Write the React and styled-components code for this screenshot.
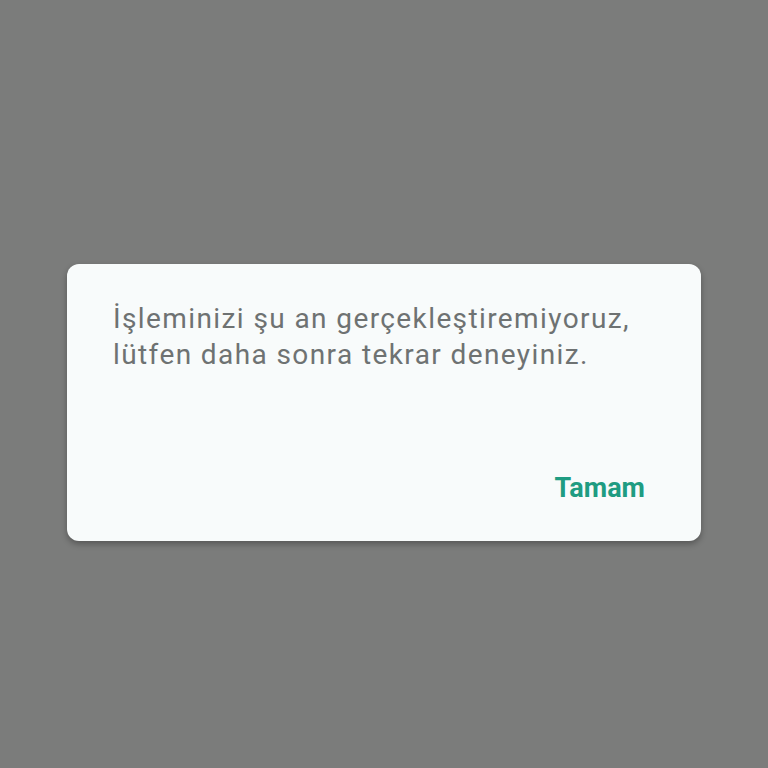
import { createGlobalStyle, styled } from 'styled-components';

const GlobalStyle = createGlobalStyle`
    html, body {
        margin: 0;
        padding: 0;
        background: #7b7c7b;
    }
    #root {
        min-height: 768px;
    }
`;

const App = () => {
    return (
        <>
            <GlobalStyle />
            <Overlay>
                <Dialog>
                    <Message>
                        İşleminizi şu an gerçekleştiremiyoruz,
                        <br />
                        lütfen daha sonra tekrar deneyiniz.
                    </Message>
                    <Actions>
                        <ActionBtn>Tamam</ActionBtn>
                    </Actions>
                </Dialog>
            </Overlay>
        </>
    );
};

export default App;

const Overlay = styled.div`
    display: flex;
    justify-content: center;
    align-items: flex-start;
    min-height: 768px;
    padding-top: 264px;
    box-sizing: border-box;
`;

const Dialog = styled.div`
    display: flex;
    flex-direction: column;
    width: 634px;
    height: 277px;
    box-sizing: border-box;
    padding: 37px 56px 0 46px;
    border-radius: 12px;
    background: #f8fbfb;
    box-shadow: 0 3px 6px rgba(0, 0, 0, 0.3);
`;

const Message = styled.p`
    margin: 0;
    font-family: Roboto, 'Liberation Sans', sans-serif;
    font-size: 28px;
    line-height: 36px;
    letter-spacing: 1.4px;
    color: #6e7272;
`;

const Actions = styled.div`
    display: flex;
    justify-content: flex-end;
    margin-top: 99px;
`;

const ActionBtn = styled.button`
    padding: 0;
    border: 0;
    background: none;
    font-family: Roboto, 'Liberation Sans', sans-serif;
    font-size: 27px;
    font-weight: 700;
    line-height: 32px;
    color: #1f9c82;
    cursor: pointer;
`;
